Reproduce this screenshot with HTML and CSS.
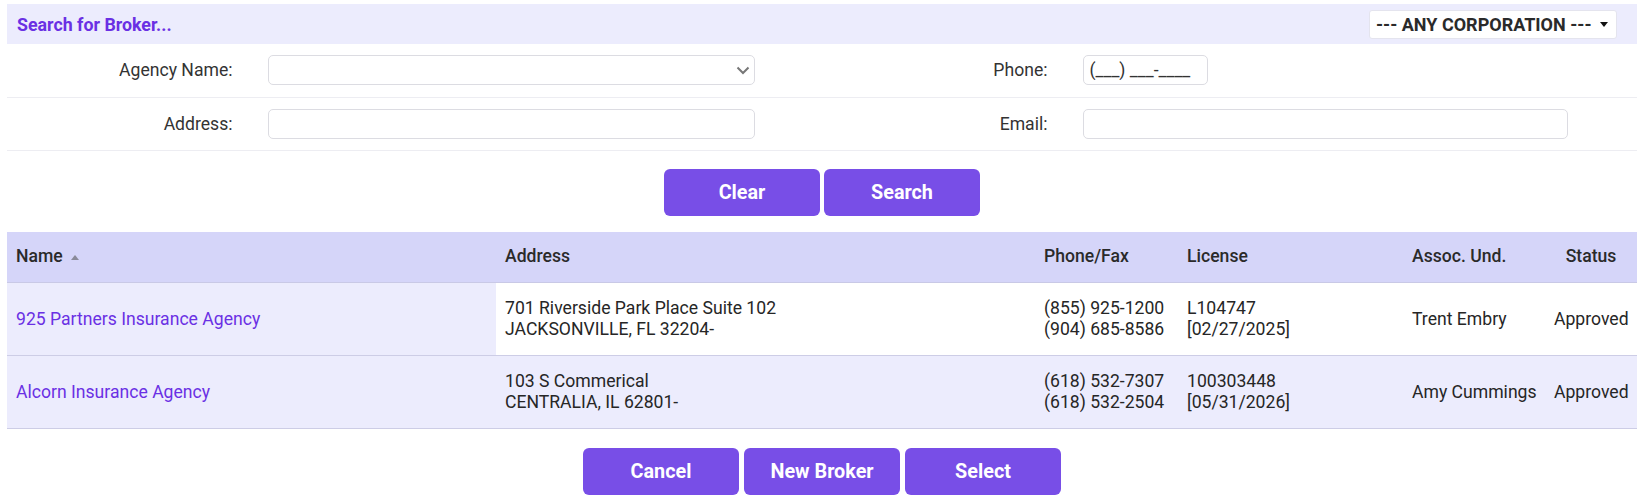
FILE: index.html
```html
<!DOCTYPE html>
<html lang="en">
<head>
<meta charset="utf-8">
<title>Search for Broker</title>
<link rel="stylesheet" href="styles.css">
</head>
<body>
<div class="page">
  <div class="titlebar">
    <span class="title">Search for Broker...</span>
    <div class="corp-select">
      <span class="corp-text">--- ANY CORPORATION ---</span>
      <span class="corp-caret"></span>
    </div>
  </div>

  <table class="form">
    <colgroup>
      <col class="c-label"><col class="c-field"><col class="c-label"><col class="c-field">
    </colgroup>
    <tr>
      <td class="label">Agency Name:</td>
      <td>
        <div class="select-box">
          <svg class="chev" width="14" height="9" viewBox="0 0 14 9"><path d="M1.5 1.5 L7 7 L12.5 1.5" fill="none" stroke="#777" stroke-width="2"/></svg>
        </div>
      </td>
      <td class="label">Phone:</td>
      <td><input class="input phone" type="text" value="(___) ___-____"></td>
    </tr>
    <tr>
      <td class="label">Address:</td>
      <td><input class="input wide" type="text"></td>
      <td class="label">Email:</td>
      <td><input class="input wide email" type="text"></td>
    </tr>
  </table>

  <div class="actions top">
    <button class="btn">Clear</button>
    <button class="btn">Search</button>
  </div>

  <table class="grid">
    <colgroup>
      <col class="g-name"><col class="g-addr"><col class="g-phone"><col class="g-lic"><col class="g-assoc"><col class="g-status">
    </colgroup>
    <thead>
      <tr>
        <th>Name <span class="sort-up"></span></th>
        <th>Address</th>
        <th>Phone/Fax</th>
        <th>License</th>
        <th>Assoc. Und.</th>
        <th class="center">Status</th>
      </tr>
    </thead>
    <tbody>
      <tr class="row-plain">
        <td class="name-cell"><a href="#">925 Partners Insurance Agency</a></td>
        <td>701 Riverside Park Place Suite 102<br>JACKSONVILLE, FL 32204-</td>
        <td>(855) 925-1200<br>(904) 685-8586</td>
        <td>L104747<br>[02/27/2025]</td>
        <td>Trent Embry</td>
        <td class="center">Approved</td>
      </tr>
      <tr class="row-alt">
        <td class="name-cell"><a href="#">Alcorn Insurance Agency</a></td>
        <td>103 S Commerical<br>CENTRALIA, IL 62801-</td>
        <td>(618) 532-7307<br>(618) 532-2504</td>
        <td>100303448<br>[05/31/2026]</td>
        <td>Amy Cummings</td>
        <td class="center">Approved</td>
      </tr>
    </tbody>
  </table>

  <div class="actions bottom">
    <button class="btn">Cancel</button>
    <button class="btn">New Broker</button>
    <button class="btn">Select</button>
  </div>
</div>
</body>
</html>
```

FILE: styles.css
```css
* { box-sizing: border-box; }

html, body {
  margin: 0;
  padding: 0;
  background: #ffffff;
}

body {
  font-family: Roboto, "Liberation Sans", Arial, sans-serif;
  font-size: 17.6px;
  color: #333333;
}

.page {
  padding: 4px 4px 0 7px;
}

/* Title bar */
.titlebar {
  height: 40px;
  background: #ececfd;
  display: flex;
  align-items: center;
  justify-content: space-between;
  padding: 0 20px 0 10px;
}

.title {
  color: #6a30e4;
  font-weight: 700;
  font-size: 17.8px;
}

.corp-select {
  width: 248px;
  height: 29px;
  background: #ffffff;
  border: 1px solid #e4e4ee;
  border-radius: 3px;
  display: flex;
  align-items: center;
  justify-content: space-between;
  padding: 0 8px 0 6px;
}

.corp-text {
  font-weight: 700;
  font-size: 18px;
  color: #2a2a2a;
}

.corp-caret {
  width: 0;
  height: 0;
  border-left: 4px solid transparent;
  border-right: 4px solid transparent;
  border-top: 5px solid #111111;
}

/* Form */
.form {
  width: 100%;
  border-collapse: collapse;
  table-layout: fixed;
}

.c-label { width: 15%; }
.c-field { width: 35%; }

.form td {
  height: 53px;
  padding: 0 0 0 16px;
  border-bottom: 1px solid #ededf2;
  vertical-align: middle;
}

.form td.label {
  text-align: right;
  padding: 0 19px 0 0;
  color: #333333;
}

.select-box,
.input {
  display: block;
  height: 30px;
  border: 1px solid #dcdce2;
  border-radius: 5px;
  background: #ffffff;
  font-family: Roboto, "Liberation Sans", Arial, sans-serif;
  font-size: 17.6px;
  color: #333333;
  padding: 0 6px;
  outline: none;
}

.select-box {
  width: 487px;
  display: flex;
  align-items: center;
  justify-content: flex-end;
  padding-right: 4px;
}

.input.wide { width: 487px; }
.input.email { width: 485px; }
.input.phone { width: 125px; }

/* Buttons */
.actions {
  display: flex;
  justify-content: center;
  gap: 4px;
}

.actions.top { margin-top: 18px; }
.actions.bottom { margin-top: 19px; gap: 5px; }

.btn {
  width: 156px;
  height: 47px;
  border: none;
  border-radius: 6px;
  background: #784ee7;
  color: #ffffff;
  font-family: Roboto, "Liberation Sans", Arial, sans-serif;
  font-weight: 700;
  font-size: 19.8px;
  cursor: pointer;
}

/* Grid */
.grid {
  width: 100%;
  margin-top: 16px;
  border-collapse: collapse;
  table-layout: fixed;
  font-size: 17.6px;
  line-height: 21px;
  color: #262626;
}

.g-name { width: 489px; }
.g-addr { width: 539px; }
.g-phone { width: 143px; }
.g-lic { width: 225px; }
.g-assoc { width: 142px; }
.g-status { width: 92px; }

.grid th {
  height: 51px;
  background: #d5d5f9;
  text-align: left;
  font-weight: 500;
  padding: 0 9px;
  border-bottom: 1px solid #c9c9e6;
  color: #2a2a2a;
  white-space: nowrap;
}

.grid td {
  height: 73px;
  padding: 0 9px;
  vertical-align: middle;
  border-bottom: 1px solid #cdcde6;
  white-space: nowrap;
}

.grid .center { text-align: center; }

.row-plain td { background: #ffffff; }
.row-plain td.name-cell { background: #ececfd; }
.row-alt td { background: #ececfd; }

.grid a {
  color: #6a30e4;
  text-decoration: none;
}

.sort-up {
  display: inline-block;
  width: 0;
  height: 0;
  margin-left: 4px;
  vertical-align: middle;
  border-left: 4px solid transparent;
  border-right: 4px solid transparent;
  border-bottom: 5px solid #8a8a9a;
}
```
